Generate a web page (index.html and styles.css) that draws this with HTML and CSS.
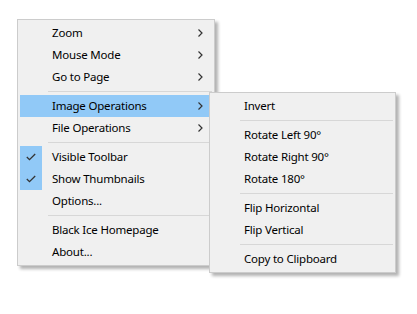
FILE: index.html
```html
<!DOCTYPE html>
<html lang="en">

<head>
    <meta charset="UTF-8">
    <title>Context menu</title>
    <link rel="stylesheet" href="styles.css">
</head>

<body>

    <div class="scene">
        <ul class="menu main">
            <li class="item">Zoom<span class="arrow"><svg width="5" height="8" viewBox="0 0 5 8"><path d="M0.5 0.5 L4 4 L0.5 7.5" /></svg></span></li>
            <li class="item">Mouse Mode<span class="arrow"><svg width="5" height="8" viewBox="0 0 5 8"><path d="M0.5 0.5 L4 4 L0.5 7.5" /></svg></span></li>
            <li class="item">Go to Page<span class="arrow"><svg width="5" height="8" viewBox="0 0 5 8"><path d="M0.5 0.5 L4 4 L0.5 7.5" /></svg></span></li>
            <li class="sep"></li>
            <li class="item hot">Image Operations<span class="arrow"><svg width="5" height="8" viewBox="0 0 5 8"><path d="M0.5 0.5 L4 4 L0.5 7.5" /></svg></span></li>
            <li class="item">File Operations<span class="arrow"><svg width="5" height="8" viewBox="0 0 5 8"><path d="M0.5 0.5 L4 4 L0.5 7.5" /></svg></span></li>
            <li class="sep"></li>
            <li class="item checked"><span class="check"><svg width="10" height="8" viewBox="0 0 10 8"><path d="M0.8 4 L3.5 6.7 L9.2 1" /></svg></span>Visible Toolbar</li>
            <li class="item checked"><span class="check"><svg width="10" height="8" viewBox="0 0 10 8"><path d="M0.8 4 L3.5 6.7 L9.2 1" /></svg></span>Show Thumbnails</li>
            <li class="item">Options...</li>
            <li class="sep"></li>
            <li class="item">Black Ice Homepage</li>
            <li class="item">About...</li>
        </ul>

        <ul class="menu sub">
            <li class="item">Invert</li>
            <li class="sep"></li>
            <li class="item">Rotate Left 90°</li>
            <li class="item">Rotate Right 90°</li>
            <li class="item">Rotate 180°</li>
            <li class="sep"></li>
            <li class="item">Flip Horizontal</li>
            <li class="item">Flip Vertical</li>
            <li class="sep"></li>
            <li class="item">Copy to Clipboard</li>
        </ul>
    </div>

</body>

</html>
```

FILE: styles.css
```css
body {
    margin: 0;
    background-color: white;
    font-family: "Noto Sans", "Open Sans", sans-serif;
    font-size: 11.5px;
    letter-spacing: -0.2px;
    color: black;
}

.scene {
    position: relative;
    width: 417px;
    height: 314px;
    padding: 19px 0 0 17px;
    box-sizing: border-box;
}

.menu {
    list-style: none;
    margin: 0;
    padding: 2px;
    background-color: #f0f0f0;
    border: 1px solid #cccccc;
    box-shadow: 3px 3px 3px rgba(0, 0, 0, 0.3);
    box-sizing: border-box;
}

.main {
    width: 198px;
}

/* submenu opens over the main menu */
.sub {
    position: absolute;
    left: 209px;
    top: 92px;
    width: 187px;
}

.item {
    position: relative;
    height: 22px;
    line-height: 22px;
    padding-left: 32px;
    white-space: nowrap;
}

.hot {
    background-color: #91c9f7;
}

.arrow {
    position: absolute;
    right: 9px;
    top: 7px;
    height: 8px;
    line-height: 0;
}

.arrow path {
    fill: none;
    stroke: #333333;
    stroke-width: 1.2;
}

.check {
    position: absolute;
    left: 0;
    top: 0;
    width: 22px;
    height: 22px;
    background-color: #91c9f7;
    display: flex;
    align-items: center;
    justify-content: center;
}

.check path {
    fill: none;
    stroke: #333333;
    stroke-width: 1.3;
}

.sep {
    height: 7px;
    margin-left: 28px;
    display: flex;
    align-items: center;
}

.sep::after {
    content: "";
    flex: 1;
    height: 1px;
    background-color: #d7d7d7;
}
```
